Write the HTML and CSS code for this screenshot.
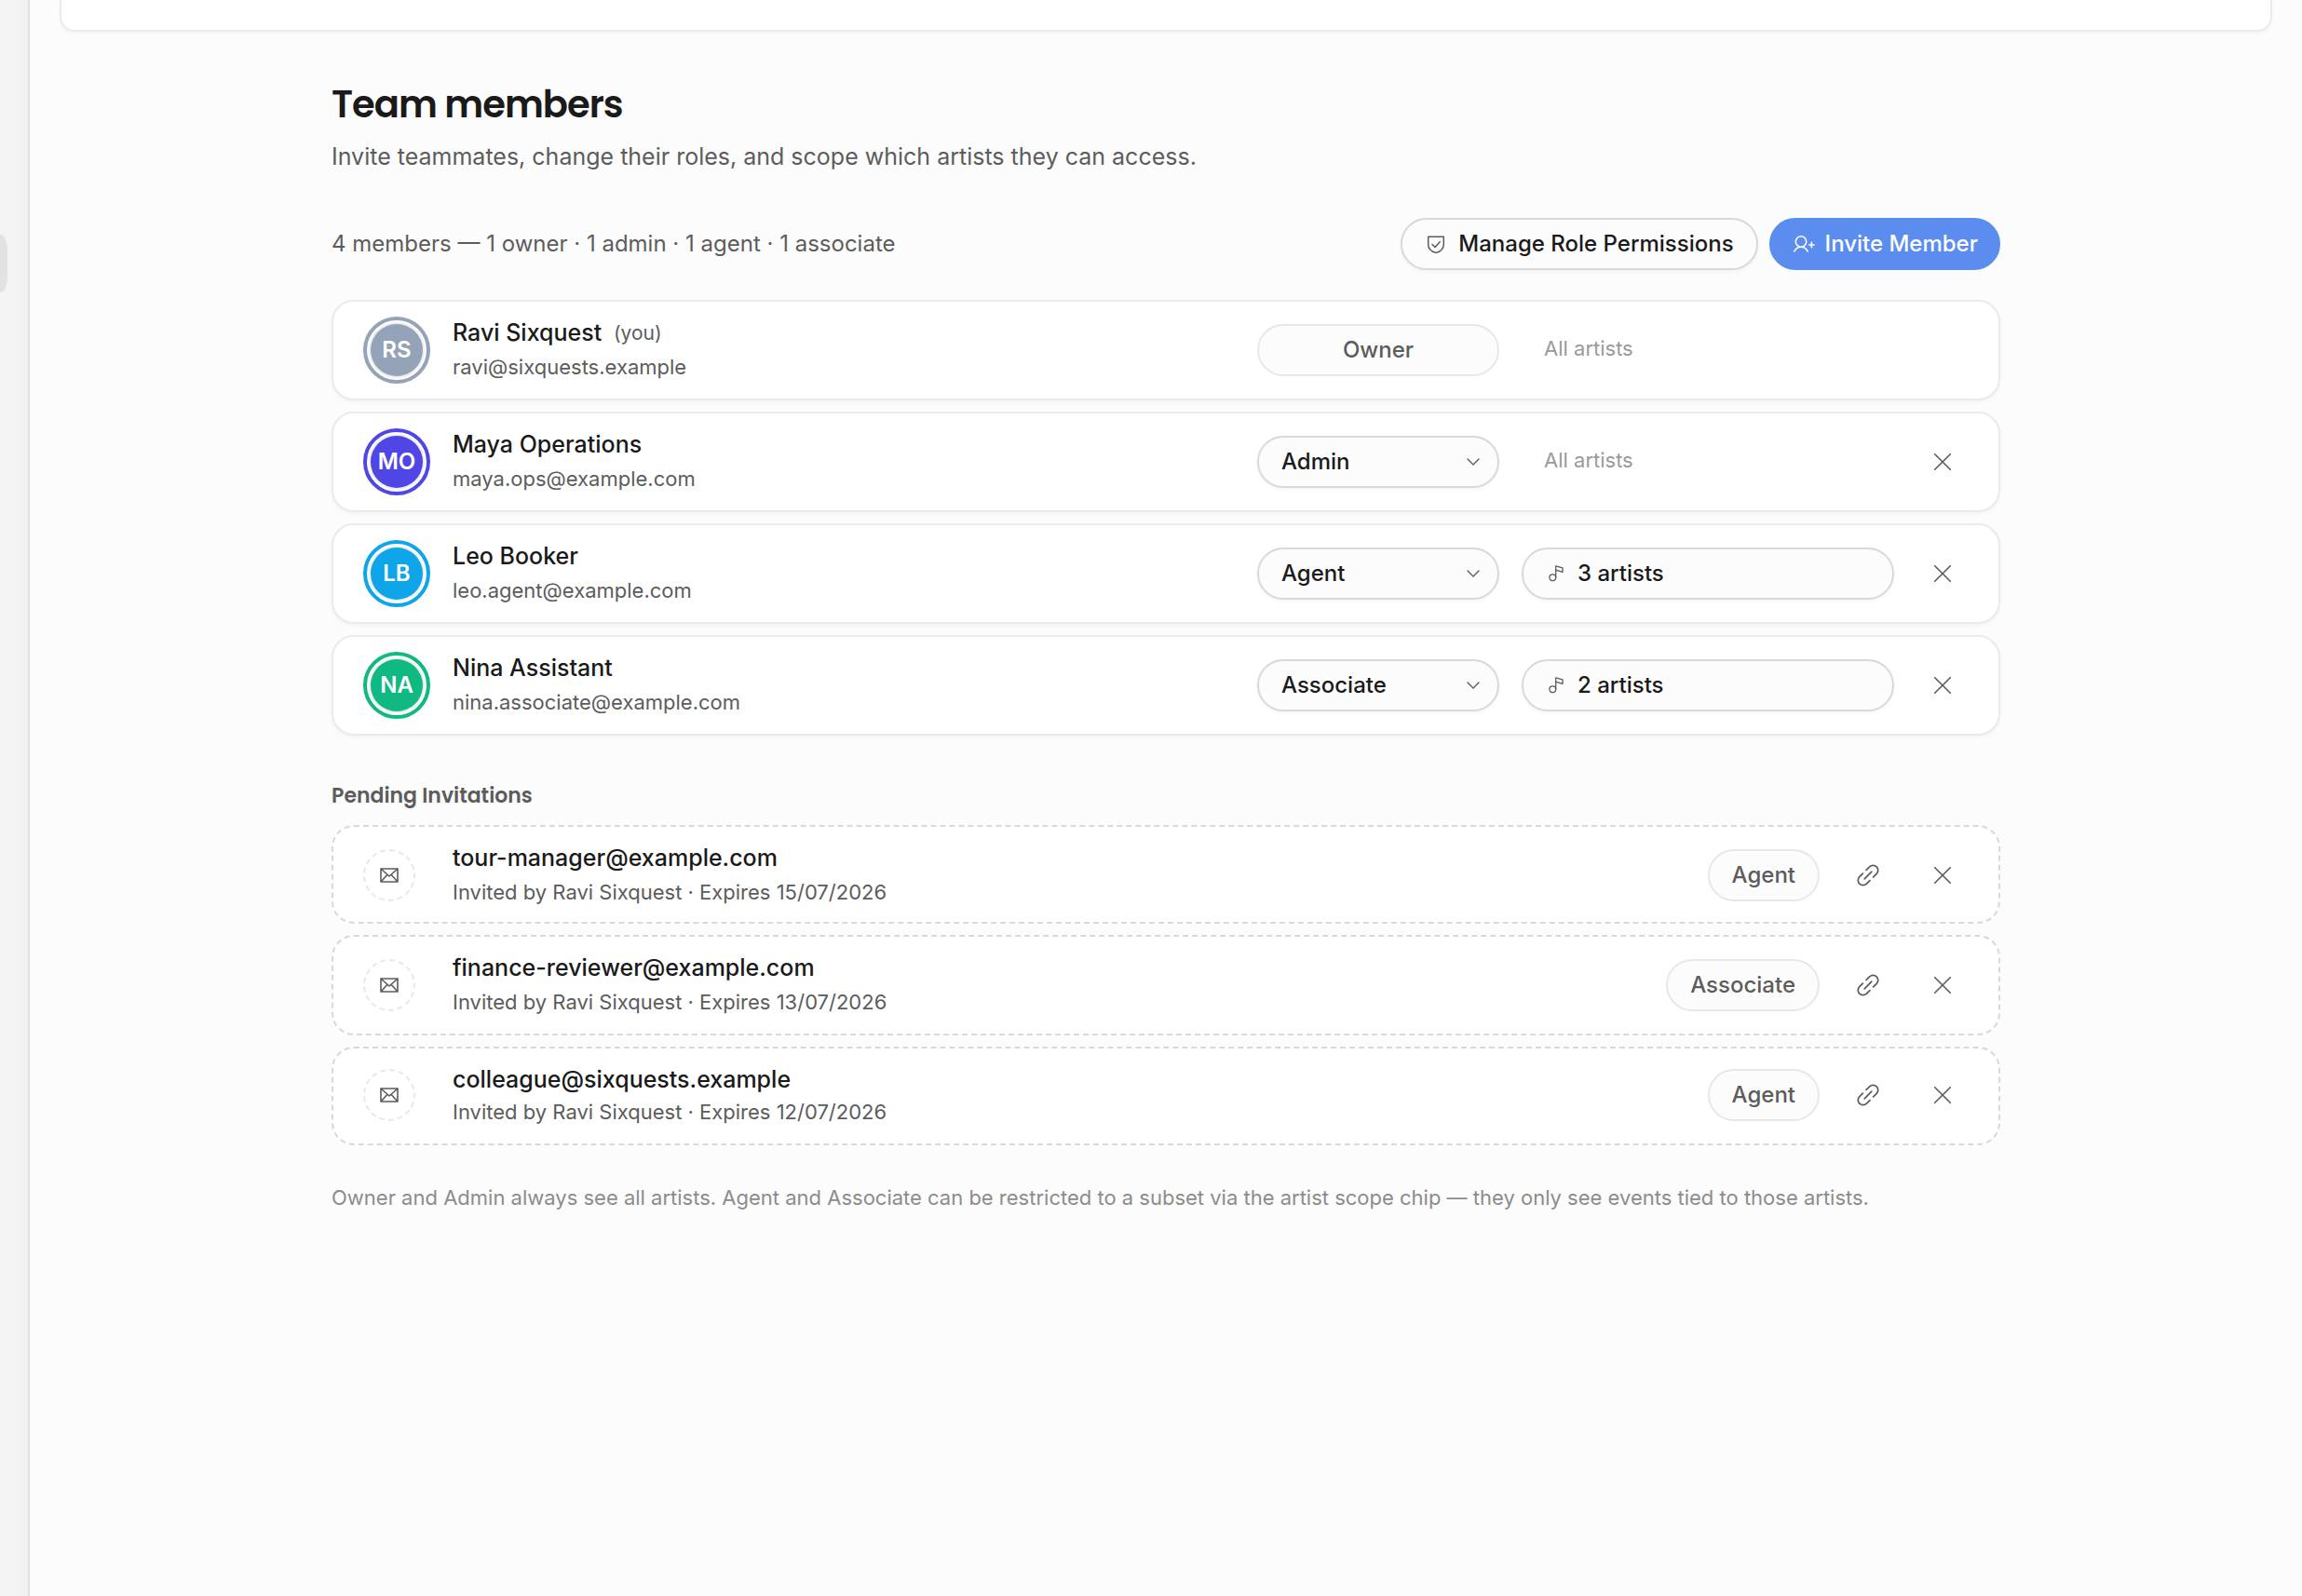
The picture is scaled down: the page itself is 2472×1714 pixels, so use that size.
FILE: index.html
```html
<!DOCTYPE html>
<html lang="en">
<head>
<meta charset="utf-8">
<title>Team members</title>
<link rel="stylesheet" href="styles.css">
</head>
<body>
<svg class="sprite" width="0" height="0">
  <symbol id="icon-close" viewBox="0 0 20 20"><path d="M1.700 1.700l16.600 16.600M18.300 1.700l-16.600 16.600"/></symbol>
  <symbol id="icon-chevron" viewBox="0 0 16 10"><path d="M2 2l6 6 6-6"/></symbol>
  <symbol id="icon-link" viewBox="0 0 24 24"><path d="M8.500 15.500l7-7M10.200 6.800l3.300-3.300a4.950 4.950 0 0 1 7 7L17.200 13.800M13.800 17.200l-3.300 3.300a4.950 4.950 0 0 1-7-7L6.800 10.200"/></symbol>
  <symbol id="icon-mail" viewBox="0 0 20 16"><path d="M1 1h18v14H1zM1 1l9 8 9-8M1 15l7-7.700M19 15l-7-7.700"/></symbol>
  <symbol id="icon-note" viewBox="0 0 18 18"><circle cx="5.300" cy="13.300" r="3.400"/><path d="M8.700 13.300V.9l7.300 1.900v4.600l-7.300-2.200"/></symbol>
  <symbol id="icon-shield" viewBox="0 0 20 20"><path d="M1.700 2.200h16.600v8c0 5-3.600 8-8.300 9.200-4.700-1.200-8.300-4.200-8.300-9.200zM6 10.500l3 3 5.200-5.800"/></symbol>
  <symbol id="icon-user-add" viewBox="0 0 24 18"><circle cx="8" cy="6.500" r="5.700"/><path d="M.8 17c1.400-3 4-4.800 7.200-4.800s5.800 1.800 7.200 4.800M16.700 10h5.400M19.400 7.300v5.400"/></symbol>
</svg>

<div class="app">
  <aside class="sidebar">
    <div class="sidebar-item"></div>
  </aside>

  <main class="main">
    <div class="top-card"></div>

    <section class="team">
      <h1>Team members</h1>
      <p class="lead">Invite teammates, change their roles, and scope which artists they can access.</p>

      <div class="toolbar">
        <span class="summary">4 members — 1 owner · 1 admin · 1 agent · 1 associate</span>
        <button class="btn"><svg class="icon shield"><use href="#icon-shield"/></svg>Manage Role Permissions</button>
        <button class="btn btn-primary"><svg class="icon user-add"><use href="#icon-user-add"/></svg>Invite Member</button>
      </div>

      <div class="list">
        <div class="member">
          <div class="avatar slate">RS</div>
          <div class="who">
            <div class="name">Ravi Sixquest <span class="you">(you)</span></div>
            <div class="email">ravi@sixquests.example</div>
          </div>
          <div class="role role-fixed">Owner</div>
          <div class="scope-all">All artists</div>
          <div class="action"></div>
        </div>

        <div class="member">
          <div class="avatar indigo">MO</div>
          <div class="who">
            <div class="name">Maya Operations</div>
            <div class="email">maya.ops@example.com</div>
          </div>
          <div class="role">Admin<svg class="icon chevron"><use href="#icon-chevron"/></svg></div>
          <div class="scope-all">All artists</div>
          <div class="action"><svg class="icon close"><use href="#icon-close"/></svg></div>
        </div>

        <div class="member">
          <div class="avatar sky">LB</div>
          <div class="who">
            <div class="name">Leo Booker</div>
            <div class="email">leo.agent@example.com</div>
          </div>
          <div class="role">Agent<svg class="icon chevron"><use href="#icon-chevron"/></svg></div>
          <div class="scope"><svg class="icon note"><use href="#icon-note"/></svg>3 artists</div>
          <div class="action"><svg class="icon close"><use href="#icon-close"/></svg></div>
        </div>

        <div class="member">
          <div class="avatar green">NA</div>
          <div class="who">
            <div class="name">Nina Assistant</div>
            <div class="email">nina.associate@example.com</div>
          </div>
          <div class="role">Associate<svg class="icon chevron"><use href="#icon-chevron"/></svg></div>
          <div class="scope"><svg class="icon note"><use href="#icon-note"/></svg>2 artists</div>
          <div class="action"><svg class="icon close"><use href="#icon-close"/></svg></div>
        </div>
      </div>

      <h2>Pending Invitations</h2>

      <div class="list">
        <div class="invite">
          <div class="mail"><svg class="icon envelope"><use href="#icon-mail"/></svg></div>
          <div class="who">
            <div class="name">tour-manager@example.com</div>
            <div class="email">Invited by Ravi Sixquest · Expires 15/07/2026</div>
          </div>
          <div class="badge">Agent</div>
          <div class="action"><svg class="icon link"><use href="#icon-link"/></svg></div>
          <div class="action"><svg class="icon close"><use href="#icon-close"/></svg></div>
        </div>

        <div class="invite">
          <div class="mail"><svg class="icon envelope"><use href="#icon-mail"/></svg></div>
          <div class="who">
            <div class="name">finance-reviewer@example.com</div>
            <div class="email">Invited by Ravi Sixquest · Expires 13/07/2026</div>
          </div>
          <div class="badge">Associate</div>
          <div class="action"><svg class="icon link"><use href="#icon-link"/></svg></div>
          <div class="action"><svg class="icon close"><use href="#icon-close"/></svg></div>
        </div>

        <div class="invite">
          <div class="mail"><svg class="icon envelope"><use href="#icon-mail"/></svg></div>
          <div class="who">
            <div class="name">colleague@sixquests.example</div>
            <div class="email">Invited by Ravi Sixquest · Expires 12/07/2026</div>
          </div>
          <div class="badge">Agent</div>
          <div class="action"><svg class="icon link"><use href="#icon-link"/></svg></div>
          <div class="action"><svg class="icon close"><use href="#icon-close"/></svg></div>
        </div>
      </div>

      <p class="note-text">Owner and Admin always see all artists. Agent and Associate can be restricted to a subset via the artist scope chip — they only see events tied to those artists.</p>
    </section>
  </main>
</div>
</body>
</html>
```

FILE: styles.css
```css
* {
  box-sizing: border-box;
}
body {
  margin: 0;
  background: #fcfcfc;
  color: #1a1a1a;
  font-family: Inter, "Liberation Sans", sans-serif;
  font-size: 24px;
}
h1, h2, p {
  margin: 0;
}
.sprite {
  display: block;
}
.app {
  display: flex;
  height: 1714px;
  overflow: hidden;
}

/* sidebar edge */
.sidebar {
  width: 32px;
  padding-top: 252px;
  background: linear-gradient(90deg, #f4f4f4 50%, #f0f0f0);
  border-right: 2px solid #e0e0e0;
}
.sidebar-item {
  width: 8px;
  height: 62px;
  background: #e2e2e2;
  border-radius: 0 8px 8px 0 / 0 16px 16px 0;
}

.main {
  flex: 1;
  padding: 0 32px;
}
.top-card {
  height: 34px;
  background: #fff;
  border: 2px solid #ebebeb;
  border-top: 0;
  border-radius: 0 0 16px 16px;
  box-shadow: 0 2px 4px rgba(0, 0, 0, .03);
}
.team {
  width: 1792px;
  margin: 0 auto;
  padding-top: 48px;
}
h1 {
  font-family: Poppins, Inter, sans-serif;
  font-size: 40px;
  font-weight: 600;
  line-height: 60px;
  letter-spacing: -1px;
}
.lead {
  margin-top: 8px;
  color: #5c5c5c;
  font-size: 25px;
  line-height: 36px;
}

.toolbar {
  display: flex;
  align-items: center;
  gap: 12px;
  height: 56px;
  margin: 48px 0 32px;
}
.summary {
  margin-right: auto;
  padding-bottom: 2px;
  color: #5c5c5c;
}
.btn {
  display: flex;
  align-items: center;
  height: 56px;
  padding: 0 24px 2px;
  background: #fcfcfc;
  border: 2px solid #d9d9d9;
  border-radius: 28px;
  box-shadow: 0 2px 4px rgba(0, 0, 0, .04);
  color: #1a1a1a;
  font: 500 24px Inter, sans-serif;
  white-space: nowrap;
}
.btn-primary {
  padding-right: 22px;
  background: #5b8def;
  border-color: #5b8def;
  box-shadow: none;
  color: #fff;
}
.icon {
  display: block;
  flex: none;
  fill: none;
  stroke: #5c5c5c;
  stroke-width: 1.6;
  stroke-linecap: round;
  stroke-linejoin: round;
}
.shield {
  width: 20px;
  height: 20px;
  margin: 2px 14px 0 2px;
  stroke-width: 1.5;
}
.user-add {
  width: 24px;
  height: 18px;
  margin: 2px 10px 0 0;
  stroke: #fff;
}

.list {
  display: flex;
  flex-direction: column;
  gap: 12px;
}
.member,
.invite {
  display: flex;
  align-items: center;
  background: #fff;
  border: 2px solid #ebebeb;
  border-radius: 24px;
}
.member {
  height: 108px;
  padding: 0 32px;
  box-shadow: 0 2px 4px rgba(0, 0, 0, .04);
}
.avatar {
  --tone: #94a3b8;
  width: 72px;
  height: 72px;
  padding: 4px;
  background:
    linear-gradient(var(--tone), var(--tone)) content-box,
    radial-gradient(closest-side, #e6e6e6 87%, #fff 97%) padding-box;
  border: 4px solid var(--tone);
  border-radius: 50%;
  color: #fff;
  font-weight: 600;
  line-height: 55px;
  text-align: center;
}
.avatar.indigo {
  --tone: #4f46e5;
}
.avatar.sky {
  --tone: #0ea5e9;
}
.avatar.green {
  --tone: #10b981;
}
.who {
  flex: 1;
  margin-left: 24px;
}
.name {
  font-size: 25px;
  font-weight: 500;
  line-height: 36px;
}
.you {
  margin-left: 6px;
  color: #5c5c5c;
  font-size: 21px;
  font-weight: 400;
  line-height: 1;
  vertical-align: 1px;
}
.email {
  color: #5c5c5c;
  font-size: 22px;
  line-height: 38px;
}
.role,
.scope,
.badge {
  display: flex;
  align-items: center;
  height: 56px;
  padding: 0 24px 2px;
  background: #fcfcfc;
  border: 2px solid #d9d9d9;
  border-radius: 28px;
  box-shadow: 0 2px 4px rgba(0, 0, 0, .04);
  font-weight: 500;
}
.role {
  justify-content: space-between;
  width: 260px;
  padding-right: 18px;
}
.role-fixed,
.badge {
  justify-content: center;
  padding-right: 24px;
  border-color: #e8e8e8;
  box-shadow: none;
  color: #5c5c5c;
}
.scope,
.scope-all {
  width: 400px;
  margin-left: 24px;
}
.scope-all {
  padding: 0 0 5px 24px;
  color: #9a9a9a;
  font-size: 22px;
}
.chevron {
  width: 16px;
  height: 10px;
  margin-top: 2px;
  stroke-width: 1.4;
}
.note {
  width: 18px;
  height: 18px;
  margin: 1px 14px 0 2px;
  stroke-width: 1.3;
}
.action {
  display: flex;
  align-items: center;
  justify-content: center;
  width: 56px;
  height: 56px;
  margin-left: 24px;
}
.close {
  width: 20px;
  height: 20px;
}
.link {
  width: 26px;
  height: 26px;
}

h2 {
  margin: 48px 0 15px;
  color: #5c5c5c;
  font-family: Poppins, Inter, sans-serif;
  font-size: 22px;
  font-weight: 600;
  line-height: 33px;
}
.invite {
  height: 106px;
  padding: 2px 32px 0;
  border-style: dashed;
  border-color: #d9d9d9;
}
.invite:nth-child(2) {
  height: 108px;
  padding-top: 0;
}
.invite:last-child {
  padding: 0 32px 2px;
}
.mail {
  display: flex;
  align-items: center;
  justify-content: center;
  width: 56px;
  height: 56px;
  border: 2px dashed #e8e8e8;
  border-radius: 50%;
}
.envelope {
  width: 20px;
  height: 16px;
}
.invite .who {
  margin-left: 40px;
}
.invite:last-child .name {
  margin: 2px 0 -2px;
}
.note-text {
  margin-top: 40px;
  color: #8c8c8c;
  font-size: 22px;
  line-height: 33px;
  white-space: nowrap;
}
```
